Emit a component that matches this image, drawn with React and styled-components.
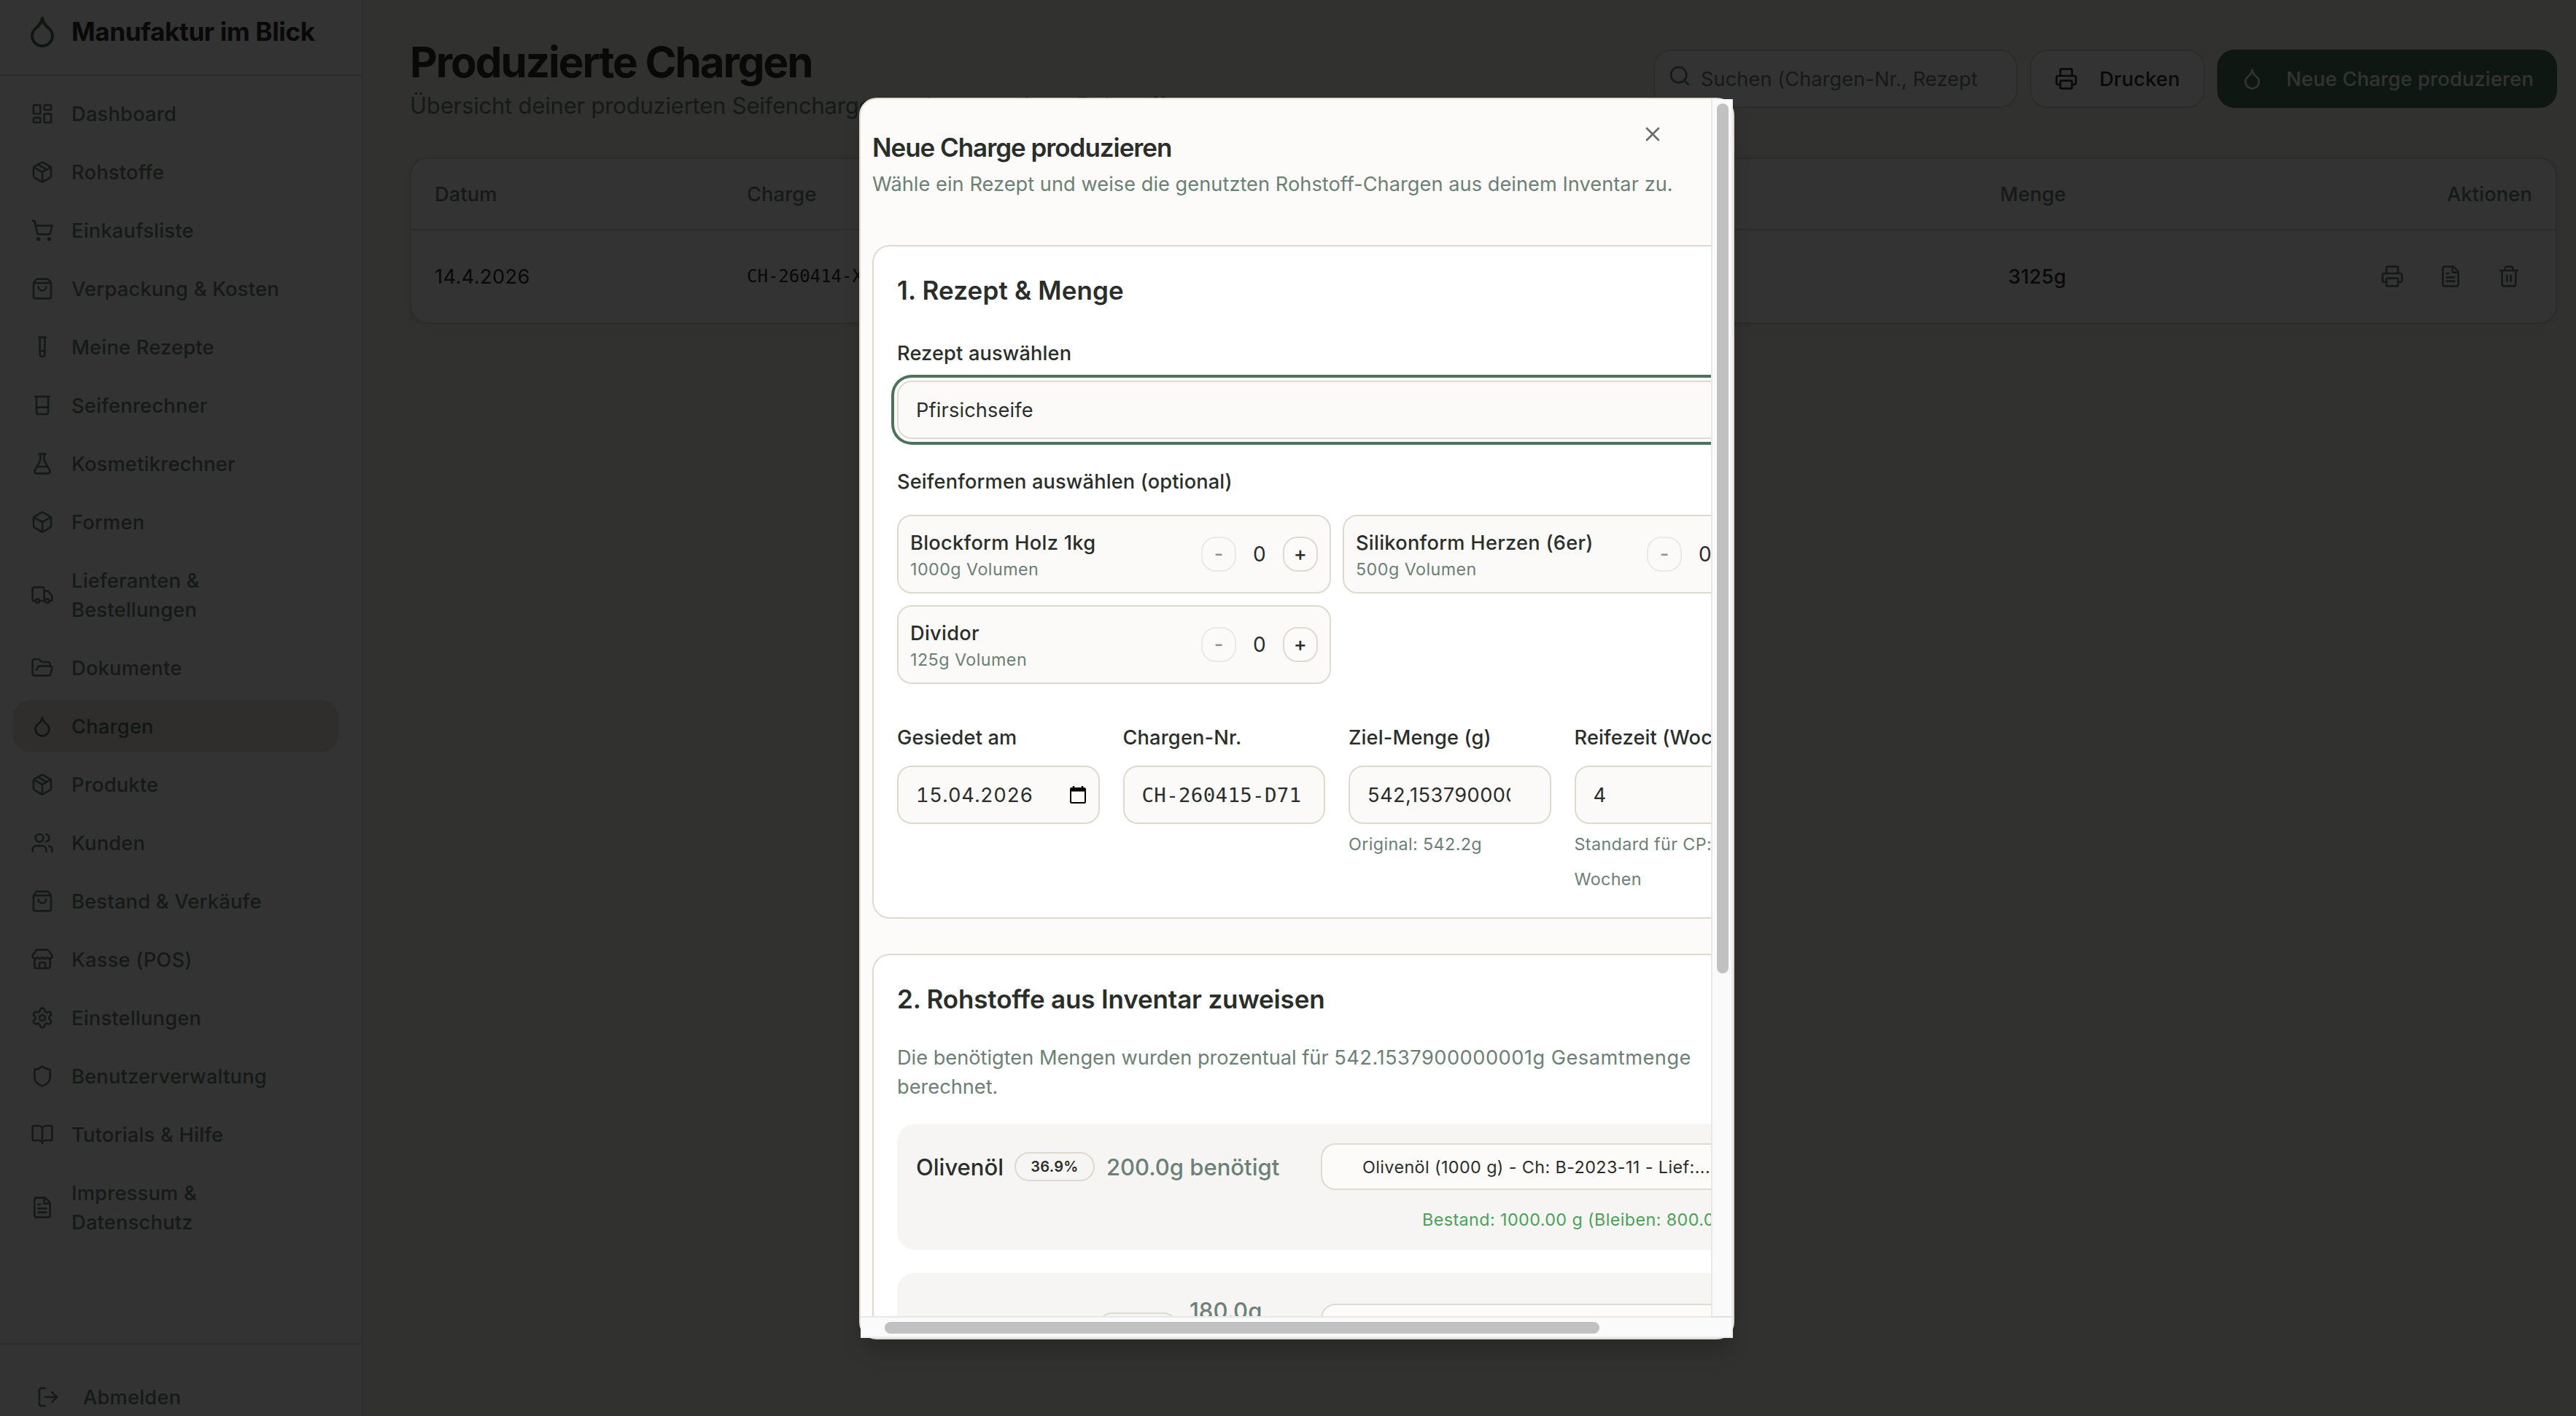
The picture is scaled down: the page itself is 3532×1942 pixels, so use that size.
import styled, { createGlobalStyle } from 'styled-components';
import {
  LayoutDashboard, Package, ShoppingCart, ShoppingBag, TestTube, Beaker, FlaskConical, Box, Truck,
  FolderOpen, Droplet, Users, Store, Settings, Shield, BookOpen, FileText, LogOut, Printer, Search, Trash2, X,
} from 'lucide-react';

const GlobalStyle = createGlobalStyle`
  * { box-sizing: border-box; }
  body {
    margin: 0;
    overflow: hidden;
    font-family: Inter, "Liberation Sans", sans-serif;
    font-size: 27.2px;
    letter-spacing: 0.16px;
    color: #2a2e2b;
  }
`;

const Page = styled.div`
  display: flex;
  width: 3532px;
  height: 1942px;
  overflow: hidden;
  background: #f6f3ea;
`;

const Sidebar = styled.aside`
  display: flex;
  flex-direction: column;
  flex: none;
  width: 498px;
  background: #fdfdfd;
  border-right: 2px solid #dcd9d0;
`;

const Brand = styled.div`
  display: flex;
  align-items: center;
  gap: 16px;
  height: 104px;
  padding: 0 34px 16px;
  border-bottom: 2px solid #dcd9d0;
  font-size: 35px;
  font-weight: 700;
  letter-spacing: -0.35px;
  svg { color: #4a725a; }
`;

const Nav = styled.nav`
  display: flex;
  flex-direction: column;
  flex: 1;
  gap: 8px;
  padding: 16px 32px 0 18px;
`;

const NavItem = styled.a`
  display: flex;
  align-items: center;
  gap: 24px;
  min-height: 72px;
  padding: 16px 24px;
  border-radius: 24px;
  line-height: 40px;
  font-weight: 500;
  letter-spacing: 0.26px;
  color: ${(p) => (p.$active ? '#4a725a' : '#6b8076')};
  background: ${(p) => (p.$active ? '#f1e5dc' : 'transparent')};
  svg { flex: none; }
  span { max-width: 290px; margin: 1px 0 -1px; }
`;

const SidebarFooter = styled.div`
  height: 100px;
  padding: 36px 0 0 50px;
  border-top: 2px solid #dcd9d0;
`;

const Logout = styled.div`
  display: flex;
  align-items: center;
  gap: 32px;
  height: 72px;
  font-weight: 500;
  letter-spacing: 0.26px;
  color: #6b8076;
`;

const Main = styled.main`
  flex: 1;
  padding: 46px 26px 0 64px;
`;

const PageHead = styled.header`
  display: flex;
  justify-content: space-between;
  height: 170px;
`;

const PageTitle = styled.h1`
  margin: 0;
  font-size: 58.3px;
  line-height: 79px;
  font-weight: 700;
  letter-spacing: -2.05px;
`;

const PageSub = styled.p`
  margin: -4px 0 0;
  font-size: 31px;
  line-height: 48px;
  letter-spacing: -0.2px;
  color: #6b8076;
`;

const Tools = styled.div`
  display: flex;
  gap: 17px;
  margin-top: 22px;
  height: 80px;
`;

const SearchBox = styled.div`
  display: flex;
  align-items: center;
  width: 499px;
  padding: 0 0 0 18px;
  border: 2px solid #dcd9d0;
  border-radius: 24px;
  background: #fdfdfd;
  color: #6b8076;
  svg { flex: none; margin: -8px 13px 0 0; }
  span { white-space: nowrap; letter-spacing: 0.08px; margin-top: 1px; }
`;

const Button = styled.button`
  display: flex;
  align-items: center;
  justify-content: space-between;
  width: ${(p) => p.$width}px;
  padding: 0 32px;
  border: ${(p) => (p.$primary ? '0' : '2px solid #dcd9d0')};
  border-radius: 24px;
  background: ${(p) => (p.$primary ? '#4a725a' : '#fdfdfd')};
  color: ${(p) => (p.$primary ? '#fdfdfd' : '#2a2e2b')};
  font: 500 27.2px Inter, sans-serif;
  letter-spacing: 0.2px;
  white-space: nowrap;
`;

const Table = styled.section`
  height: 228px;
  border: 2px solid #dcd9d0;
  border-radius: 24px;
  background: #fdfdfd;
  box-shadow: 0 2px 6px rgba(0, 0, 0, 0.08);
`;

const TableRow = styled.div`
  display: grid;
  grid-template-columns: 428px 1409px 400px 639px;
  align-items: center;
  height: ${(p) => (p.$head ? 98 : 126)}px;
  padding: 0 32px;
  font-weight: ${(p) => (p.$head ? 500 : 400)};
  color: ${(p) => (p.$head ? '#6b8076' : '#2a2e2b')};
  border-bottom: ${(p) => (p.$head ? '2px solid #dcd9d0' : '0')};
`;

const DateCell = styled.div`
  letter-spacing: 0.4px;
`;

const Right = styled.div`
  text-align: right;
  font-weight: 500;
`;

const Code = styled.span`
  font-family: "DejaVu Sans Mono", monospace;
  font-size: 24px;
  letter-spacing: 0;
`;

const RowActions = styled.div`
  display: flex;
  justify-content: flex-end;
  gap: 48px;
  padding-right: 16px;
  color: #6b8076;
`;

const Overlay = styled.div`
  position: absolute;
  inset: 0;
  background: rgba(0, 0, 0, 0.8);
`;

const Dialog = styled.div`
  position: absolute;
  left: 1178px;
  top: 134px;
  width: 1200px;
  height: 1703px;
  border: 2px solid #dfdad2;
  border-radius: 24px;
  background: #fcfbf9;
  box-shadow: 0 20px 30px -6px rgba(0, 0, 0, 0.2);
  display: grid;
  grid-template-columns: 1166px 30px;
  grid-template-rows: 1669px 30px;
`;

const Viewport = styled.div`
  overflow: hidden;
  border-top-left-radius: 22px;
`;

const Content = styled.div`
  position: relative;
  display: flex;
  flex-direction: column;
  gap: 48px;
  width: 1322px;
  padding: 42px 32px 0 16px;
`;

const DialogHead = styled.div`
  height: 110px;
  h2 {
    margin: 0;
    font-size: 35px;
    line-height: 48px;
    font-weight: 600;
    letter-spacing: -1.05px;
  }
  p {
    margin: 7px 0 0;
    line-height: 40px;
    letter-spacing: 0.04px;
    color: #6b8076;
  }
`;

const Close = styled.div`
  position: absolute;
  left: 1070px;
  top: 32px;
  height: 32px;
  color: #6b6e6c;
`;

const VTrack = styled.div`
  padding: 6px 4px 0 6px;
  border-left: 2px solid #e8e8e8;
  border-right: 2px solid #ededed;
  background: #fafafa;
`;

const HTrack = styled.div`
  padding: 6px 0 0 33px;
  border-top: 2px solid #e8e8e8;
  border-bottom: 2px solid #ededed;
  background: #fafafa;
`;

const Corner = styled.div`
  border-top: 2px solid #e0e0e0;
  border-right: 2px solid #ededed;
  border-bottom: 2px solid #ededed;
  background: #fafafa;
`;

const Thumb = styled.div`
  width: ${(p) => p.$w}px;
  height: ${(p) => p.$h}px;
  border-radius: 8px;
  background: #c1c1c1;
`;

const Card = styled.section`
  height: ${(p) => p.$height}px;
  padding: 35px 32px 0;
  border: 2px solid #dddad0;
  border-radius: 24px;
  background: #fff;
`;

const CardTitle = styled.h3`
  margin: 0;
  font-size: 35px;
  line-height: 50px;
  font-weight: 600;
  letter-spacing: ${(p) => p.$track || 0}px;
`;

const Label = styled.div`
  line-height: 40px;
  font-weight: 500;
  white-space: nowrap;
`;

const RecipeField = styled.div`
  margin-top: 42px;
`;

const Select = styled.div`
  display: flex;
  align-items: center;
  height: 80px;
  margin-top: 17px;
  padding: 0 24px;
  border: 2px solid #e0dad2;
  border-radius: 20px;
  background: #fbfaf8;
  box-shadow: 0 0 0 4px #fcfbf9, 0 0 0 8px #4b735b;
`;

const MoldField = styled.div`
  margin-top: 39px;
`;

const MoldGrid = styled.div`
  display: grid;
  grid-template-columns: 1fr 1fr;
  gap: 16px;
  margin-top: 25px;
`;

const Mold = styled.div`
  display: flex;
  align-items: center;
  justify-content: space-between;
  height: 108px;
  padding: 0 16px;
  border: 2px solid #dddad0;
  border-radius: 20px;
  background: #fbfaf8;
`;

const MoldName = styled.div`
  margin: 1px 0 -1px;
  font-weight: 500;
  line-height: 40px;
  letter-spacing: 0.3px;
`;

const MoldVolume = styled.div`
  margin: 1px 0 -1px;
  font-size: 23.3px;
  line-height: 32px;
  letter-spacing: 0.45px;
  color: #6b8076;
`;

const Stepper = styled.div`
  display: flex;
  align-items: center;
  gap: 16px;
  b { width: 32px; text-align: center; font-size: 28px; font-weight: 400; }
`;

const StepButton = styled.div`
  width: 48px;
  height: 48px;
  border: 2px solid #dddad0;
  border-radius: 20px;
  background: #fcfbf9;
  line-height: 44px;
  text-align: center;
  font-weight: 500;
  opacity: ${(p) => (p.$disabled ? 0.5 : 1)};
`;

const FieldGrid = styled.div`
  display: grid;
  grid-template-columns: repeat(4, 1fr);
  gap: 32px;
  margin-top: 54px;
`;

const Input = styled.div`
  display: flex;
  align-items: center;
  justify-content: space-between;
  height: 80px;
  margin-top: 18px;
  padding: 0 16px 0 24px;
  border: 2px solid #dddad0;
  border-radius: 20px;
  background: #fbfaf8;
  white-space: nowrap;
`;

const MonoText = styled.span`
  font-family: "DejaVu Sans Mono", monospace;
  font-size: 27.4px;
  letter-spacing: 0.35px;
`;

const DateText = styled.span`
  font-variant-numeric: tabular-nums;
  letter-spacing: 0.5px;
`;

const NumberText = styled.span`
  width: 196px;
  overflow: hidden;
  letter-spacing: 0.45px;
`;

const Hint = styled.div`
  margin-top: 4px;
  font-size: 23.3px;
  line-height: 48px;
  letter-spacing: 0.38px;
  color: #6b8076;
`;

const Note = styled.p`
  width: 1130px;
  margin: 36px 0 31px;
  line-height: 40px;
  letter-spacing: 0;
  color: #6b8076;
  span { letter-spacing: 0.5px; }
`;

const Ingredient = styled.div`
  display: flex;
  align-items: flex-start;
  justify-content: space-between;
  height: 172px;
  margin-bottom: 32px;
  padding: ${(p) => (p.$tall ? 42 : 26)}px 28px 0 26px;
  border-radius: 24px;
  background: #f6f5f4;
`;

const Amount = styled.div`
  display: flex;
  align-items: center;
  gap: 16px;
  height: 64px;
  font-size: 31px;
  line-height: 45px;
  font-weight: 500;
  letter-spacing: 0;
`;

const IngredientName = styled.span`
  width: ${(p) => p.$width}px;
  white-space: nowrap;
`;

const Badge = styled.span`
  width: 110px;
  height: 40px;
  border: 2px solid #dddad0;
  border-radius: 20px;
  font-size: 20px;
  line-height: 37px;
  font-weight: 600;
  letter-spacing: 0.3px;
  text-align: center;
`;

const Needed = styled.span`
  width: ${(p) => p.$width}px;
  color: #6b8076;
`;

const Stock = styled.div`
  width: 597px;
  font-size: 23.3px;
  letter-spacing: 0.42px;
`;

const StockSelect = styled.div`
  height: 64px;
  padding-left: 55px;
  border: 2px solid #dddad0;
  border-radius: 20px;
  background: #fcfbf9;
  line-height: 61px;
  white-space: nowrap;
`;

const StockLeft = styled.div`
  margin-top: 25px;
  padding-left: 139px;
  line-height: 32px;
  color: #4ba158;
  white-space: nowrap;
`;

const NAV = [
  [LayoutDashboard, 'Dashboard'],
  [Package, 'Rohstoffe'],
  [ShoppingCart, 'Einkaufsliste'],
  [ShoppingBag, 'Verpackung & Kosten'],
  [TestTube, 'Meine Rezepte'],
  [Beaker, 'Seifenrechner'],
  [FlaskConical, 'Kosmetikrechner'],
  [Box, 'Formen'],
  [Truck, 'Lieferanten & Bestellungen'],
  [FolderOpen, 'Dokumente'],
  [Droplet, 'Chargen'],
  [Package, 'Produkte'],
  [Users, 'Kunden'],
  [ShoppingBag, 'Bestand & Verkäufe'],
  [Store, 'Kasse (POS)'],
  [Settings, 'Einstellungen'],
  [Shield, 'Benutzerverwaltung'],
  [BookOpen, 'Tutorials & Hilfe'],
  [FileText, 'Impressum & Datenschutz'],
];

const MOLDS = [
  ['Blockform Holz 1kg', '1000g Volumen'],
  ['Silikonform Herzen (6er)', '500g Volumen'],
  ['Dividor', '125g Volumen'],
];

function CalendarIcon() {
  return (
    <svg width="24" height="24" viewBox="0 0 24 24" fill="none">
      <path d="M6 0v4M18 0v4" stroke="#000" strokeWidth="2.4" />
      <rect x="2" y="3" width="20" height="20" rx="1.5" stroke="#000" strokeWidth="2" />
      <path d="M2 3h20v4.500H2z" fill="#000" />
    </svg>
  );
}

export default function App() {
  return (
    <>
      <GlobalStyle />
      <Page>
        <Sidebar>
          <Brand><Droplet size={48} />Manufaktur im Blick</Brand>
          <Nav>
            {NAV.map(([Icon, label]) => (
              <NavItem key={label} $active={label === 'Chargen'}>
                <Icon size={32} />
                <span>{label}</span>
              </NavItem>
            ))}
          </Nav>
          <SidebarFooter>
            <Logout><LogOut size={32} />Abmelden</Logout>
          </SidebarFooter>
        </Sidebar>

        <Main>
          <PageHead>
            <div>
              <PageTitle>Produzierte Chargen</PageTitle>
              <PageSub>Übersicht deiner produzierten Seifenchargen und verwendeter Rohstoffe.</PageSub>
            </div>
            <Tools>
              <SearchBox><Search size={32} /><span>Suchen (Chargen-Nr., Rezept</span></SearchBox>
              <Button $width={240}><Printer size={32} />Drucken</Button>
              <Button $width={466} $primary><Droplet size={32} />Neue Charge produzieren</Button>
            </Tools>
          </PageHead>
          <Table>
            <TableRow $head>
              <div>Datum</div>
              <div>Charge</div>
              <Right>Menge</Right>
              <Right>Aktionen</Right>
            </TableRow>
            <TableRow>
              <DateCell>14.4.2026</DateCell>
              <Code>CH-260414-X</Code>
              <Right>3125g</Right>
              <RowActions><Printer size={32} /><FileText size={32} /><Trash2 size={32} /></RowActions>
            </TableRow>
          </Table>
        </Main>
      </Page>

      <Overlay />

      <Dialog>
        <Viewport>
          <Content>
            <Close><X size={32} /></Close>
            <DialogHead>
              <h2>Neue Charge produzieren</h2>
              <p>Wähle ein Rezept und weise die genutzten Rohstoff-Chargen aus deinem Inventar zu.</p>
            </DialogHead>

            <Card $height={924}>
              <CardTitle $track={0.15}>1. Rezept & Menge</CardTitle>
              <RecipeField>
                <Label>Rezept auswählen</Label>
                <Select>Pfirsichseife</Select>
              </RecipeField>
              <MoldField>
                <Label>Seifenformen auswählen (optional)</Label>
                <MoldGrid>
                  {MOLDS.map(([name, volume]) => (
                    <Mold key={name}>
                      <div>
                        <MoldName>{name}</MoldName>
                        <MoldVolume>{volume}</MoldVolume>
                      </div>
                      <Stepper>
                        <StepButton $disabled>-</StepButton>
                        <b>0</b>
                        <StepButton>+</StepButton>
                      </Stepper>
                    </Mold>
                  ))}
                </MoldGrid>
              </MoldField>
              <FieldGrid>
                <div>
                  <Label>Gesiedet am</Label>
                  <Input><DateText>15.04.2026</DateText><CalendarIcon /></Input>
                </div>
                <div>
                  <Label>Chargen-Nr.</Label>
                  <Input><MonoText>CH-260415-D71</MonoText></Input>
                </div>
                <div>
                  <Label>Ziel-Menge (g)</Label>
                  <Input><NumberText>542,1537900000001</NumberText></Input>
                  <Hint>Original: 542.2g</Hint>
                </div>
                <div>
                  <Label>Reifezeit (Wochen)</Label>
                  <Input>4</Input>
                  <Hint>Standard für CP: 4 Wochen</Hint>
                </div>
              </FieldGrid>
            </Card>

            <Card $height={620}>
              <CardTitle $track={-0.16}>2. Rohstoffe aus Inventar zuweisen</CardTitle>
              <Note>
                Die benötigten Mengen wurden prozentual für <span>542.1537900000001g Gesamtmenge</span> berechnet.
              </Note>
              <Ingredient>
                <Amount>
                  <IngredientName $width={119}>Olivenöl</IngredientName>
                  <Badge>36.9%</Badge>
                  <Needed $width={260}>200.0g benötigt</Needed>
                </Amount>
                <Stock>
                  <StockSelect>Olivenöl (1000 g) - Ch: B-2023-11 - Lief:...</StockSelect>
                  <StockLeft>Bestand: 1000.00 g (Bleiben: 800.00 g)</StockLeft>
                </Stock>
              </Ingredient>
              <Ingredient $tall>
                <Amount>
                  <IngredientName $width={233}>Kokosfett</IngredientName>
                  <Badge>33.2%</Badge>
                  <Needed $width={132}>180.0g benötigt</Needed>
                </Amount>
                <Stock>
                  <StockSelect />
                </Stock>
              </Ingredient>
            </Card>
          </Content>
        </Viewport>
        <VTrack><Thumb $w={16} $h={1193} /></VTrack>
        <HTrack><Thumb $w={980} $h={16} /></HTrack>
        <Corner />
      </Dialog>
    </>
  );
}
